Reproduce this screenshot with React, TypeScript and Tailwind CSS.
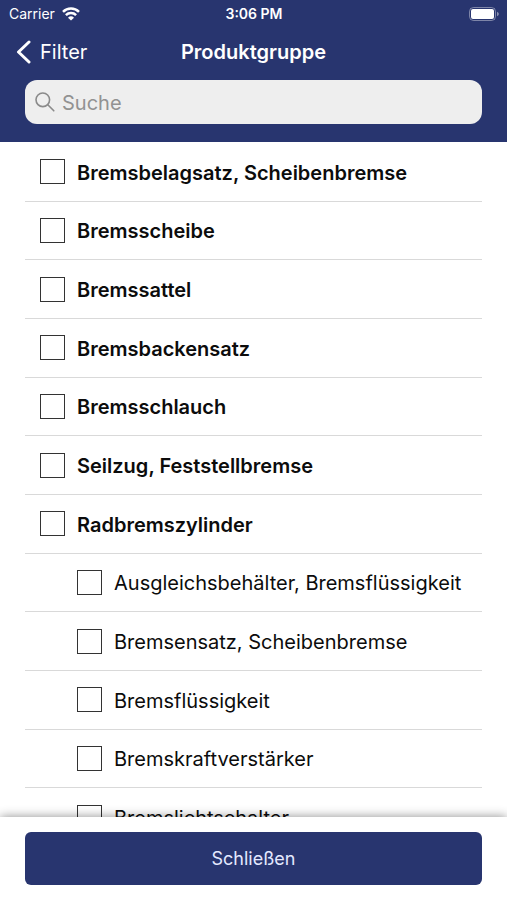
import { type FC, useState } from "react";

interface Group {
  name: string;
  nested?: boolean;
}

const GROUPS: Group[] = [
  { name: "Bremsbelagsatz, Scheibenbremse" },
  { name: "Bremsscheibe" },
  { name: "Bremssattel" },
  { name: "Bremsbackensatz" },
  { name: "Bremsschlauch" },
  { name: "Seilzug, Feststellbremse" },
  { name: "Radbremszylinder" },
  { name: "Ausgleichsbehälter, Bremsflüssigkeit", nested: true },
  { name: "Bremsensatz, Scheibenbremse", nested: true },
  { name: "Bremsflüssigkeit", nested: true },
  { name: "Bremskraftverstärker", nested: true },
  { name: "Bremslichtschalter", nested: true },
];

const StatusBar: FC = () => (
  <div className="grid h-7 grid-cols-3 items-center pl-[9px] pr-2 text-sm leading-5">
    <div className="flex items-center gap-[7px]">
      <span>Carrier</span>
      <svg className="h-[14px] w-[18px]" viewBox="0 0 18 14" fill="none" stroke="currentColor" strokeWidth={2.5}>
        <path d="M1 4.9a11.4 11.4 0 0 1 16 0" />
        <path d="M3.9 8.2a7.2 7.2 0 0 1 10.2 0" />
        <path d="M9 13.6 6 10.7a4.3 4.3 0 0 1 6 0z" fill="currentColor" stroke="none" />
      </svg>
    </div>
    <span className="text-center font-semibold">3:06 PM</span>
    <svg className="h-[14px] w-[30px] justify-self-end" viewBox="0 0 30 14" fill="none">
      <rect x="0.5" y="0.5" width="26" height="13" rx="4" stroke="white" strokeOpacity={0.4} />
      <rect x="2" y="2" width="23" height="10" rx="2" fill="white" />
      <path d="M28 4.8c2.4.8 2.4 3.6 0 4.4z" fill="white" fillOpacity={0.45} />
    </svg>
  </div>
);

const GroupRow: FC<{ group: Group; checked: boolean; onToggle: () => void }> = ({ group, checked, onToggle }) => (
  <li className="border-b border-[#d9d9d9]">
    <label className={`flex h-full cursor-pointer items-center gap-3 text-xl ${group.nested ? "pl-[52px]" : "pl-[15px] font-semibold"}`}>
      <input
        type="checkbox"
        checked={checked}
        onChange={onToggle}
        className="size-[25px] shrink-0 appearance-none border border-[#333333] bg-white checked:bg-[#28356f]"
      />
      <span className="whitespace-nowrap pt-[2px]">{group.name}</span>
    </label>
  </li>
);

export default function App() {
  const [query, setQuery] = useState("");
  const [selected, setSelected] = useState<string[]>([]);

  const toggle = (name: string) =>
    setSelected(s => (s.includes(name) ? s.filter(n => n !== name) : [...s, name]));

  const visible = GROUPS.filter(g => g.name.toLowerCase().includes(query.toLowerCase()));

  return (
    <div className="flex h-screen flex-col bg-white font-['Inter','Liberation_Sans',sans-serif] text-[#0c0c0c]">
      <header className="bg-[#28356f] pb-[18px] text-white">
        <StatusBar />
        <div className="grid h-[52px] grid-cols-[1fr_auto_1fr] items-center px-4 pb-1 text-xl">
          <button type="button" className="flex items-center gap-[9px] justify-self-start">
            <svg className="h-6 w-[15px]" viewBox="0 0 15 24" fill="none" stroke="currentColor" strokeWidth={3} strokeLinecap="round" strokeLinejoin="round">
              <path d="M13 2 2.5 12 13 22" />
            </svg>
            Filter
          </button>
          <h1 className="font-semibold">Produktgruppe</h1>
        </div>
        <label className="mx-[25px] flex h-11 items-center gap-[7px] rounded-xl bg-[#eeeeee] pl-[10px] pr-3 text-[#8a8a8a]">
          <svg className="size-5 shrink-0" viewBox="0 0 20 20" fill="none" stroke="currentColor" strokeWidth={1.6} strokeLinecap="round">
            <circle cx="7.8" cy="7.8" r="6.8" />
            <path d="m12.8 12.8 6 6" />
          </svg>
          <input
            type="text"
            value={query}
            onChange={e => setQuery(e.target.value)}
            placeholder="Suche"
            aria-label="Suche"
            className="min-w-0 flex-1 bg-transparent pt-[2px] text-xl text-[#0c0c0c] outline-none placeholder:text-[#929292]"
          />
        </label>
      </header>

      <main className="min-h-0 flex-1 overflow-hidden px-[25px] pt-px">
        <ul className="grid h-[704px] auto-rows-fr">
          {visible.map(g => (
            <GroupRow key={g.name} group={g} checked={selected.includes(g.name)} onToggle={() => toggle(g.name)} />
          ))}
        </ul>
      </main>

      <footer className="z-10 bg-white px-[25px] pb-[15px] pt-[15px] shadow-[0_0_10px_rgba(0,0,0,0.45)]">
        <button type="button" className="h-[53px] w-full rounded-md bg-[#28356f] pt-px text-lg text-[#e4e9ff]">
          Schließen
        </button>
      </footer>
    </div>
  );
}
